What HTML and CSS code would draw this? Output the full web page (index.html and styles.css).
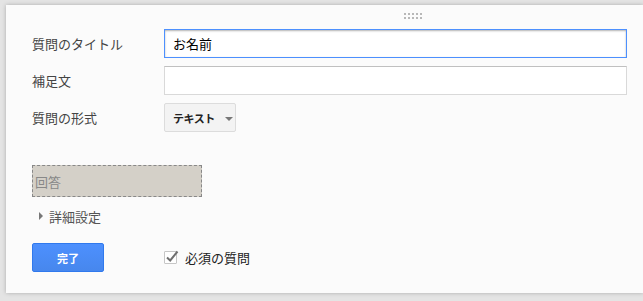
FILE: index.html
```html
<!DOCTYPE html>
<html lang="ja">
<head>
<meta charset="utf-8">
<link rel="stylesheet" href="styles.css">
</head>
<body>
<div class="card">
  <div class="handle">
    <div class="dots"><i></i><i></i><i></i><i></i><i></i></div>
    <div class="dots"><i></i><i></i><i></i><i></i><i></i></div>
  </div>
  <div class="row first">
    <div class="label">質問のタイトル</div>
    <div class="input focus">お名前</div>
  </div>
  <div class="row">
    <div class="label">補足文</div>
    <div class="input"></div>
  </div>
  <div class="row">
    <div class="label">質問の形式</div>
    <div class="select"><span class="select-text">テキスト</span><span class="arrow"></span></div>
  </div>
  <div class="answer">回答</div>
  <div class="advanced"><span class="tri"></span>詳細設定</div>
  <div class="footer">
    <div class="btn">完了</div>
    <div class="req">
      <span class="checkbox">
        <svg width="16" height="16" viewBox="0 0 16 16"><path d="M3 8.5 L6.2 11.5 L13.5 2.5" fill="none" stroke="#6f6f6f" stroke-width="2"/></svg>
      </span>
      <span class="req-text">必須の質問</span>
    </div>
  </div>
</div>
</body>
</html>
```
FILE: styles.css
```css
html, body {
  margin: 0;
  padding: 0;
}
body {
  width: 643px;
  height: 301px;
  overflow: hidden;
  background: #e4e4e4;
  font-family: "Noto Sans CJK JP", "Noto Sans", sans-serif;
}
.card {
  margin: 5px 0 0 6px;
  width: 637px;
  height: 288px;
  background: #fbfbfb;
  box-shadow: 0 0 4px rgba(0, 0, 0, 0.25);
  box-sizing: border-box;
  padding: 8px 0 0 26px;
}
.handle {
  display: flex;
  flex-direction: column;
  gap: 2px;
  margin-left: 372px;
  height: 6px;
}
.dots {
  display: flex;
  gap: 2px;
}
.dots i {
  width: 2px;
  height: 2px;
  background: #b8b8b8;
}
.row {
  display: flex;
  align-items: center;
  margin-top: 8px;
  height: 29px;
}
.row.first {
  margin-top: 10px;
}
.label {
  width: 132px;
  font-size: 13px;
  color: #444;
}
.input {
  width: 463px;
  height: 29px;
  box-sizing: border-box;
  border: 1px solid #d9d9d9;
  border-top-color: #c0c0c0;
  background: #fff;
  font-size: 13px;
  color: #000;
  padding: 0 8px;
  display: flex;
  align-items: center;
}
.input.focus {
  border: 1px solid #4d90fe;
  box-shadow: inset 0 1px 2px rgba(0, 0, 0, 0.3);
}
.select {
  width: 72px;
  height: 29px;
  box-sizing: border-box;
  border: 1px solid #dcdcdc;
  border-radius: 2px;
  background: #f3f3f3;
  display: flex;
  align-items: center;
  padding-left: 8px;
}
.select-text {
  font-size: 11px;
  font-weight: bold;
  color: #222;
  letter-spacing: -0.5px;
}
.arrow {
  margin-left: 10px;
  width: 0;
  height: 0;
  border-left: 4px solid transparent;
  border-right: 4px solid transparent;
  border-top: 4px solid #777;
  margin-top: 2px;
}
.answer {
  margin-top: 33px;
  width: 170px;
  height: 32px;
  box-sizing: border-box;
  border: 1px dashed #888;
  background: #d4d0c8;
  font-size: 13px;
  color: #888;
  display: flex;
  align-items: center;
  padding-left: 2px;
}
.advanced {
  margin-top: 11px;
  height: 16px;
  display: flex;
  align-items: center;
  font-size: 13px;
  color: #555;
  padding-left: 7px;
}
.tri {
  width: 0;
  height: 0;
  border-top: 4px solid transparent;
  border-bottom: 4px solid transparent;
  border-left: 4px solid #777;
  margin-right: 6px;
}
.footer {
  margin-top: 19px;
  display: flex;
  align-items: center;
}
.btn {
  width: 72px;
  height: 29px;
  box-sizing: border-box;
  border: 1px solid #3079ed;
  border-radius: 2px;
  background: linear-gradient(#4d90fe, #4787ed);
  color: #fff;
  font-size: 11px;
  font-weight: bold;
  display: flex;
  align-items: center;
  justify-content: center;
}
.req {
  margin-left: 60px;
  display: flex;
  align-items: center;
}
.checkbox {
  position: relative;
  width: 13px;
  height: 13px;
  box-sizing: border-box;
  border: 1px solid #c6c6c6;
  background: #fff;
  border-radius: 1px;
}
.checkbox svg {
  position: absolute;
  left: -1px;
  top: -3px;
}
.req-text {
  margin-left: 8px;
  font-size: 13px;
  color: #222;
}
```
